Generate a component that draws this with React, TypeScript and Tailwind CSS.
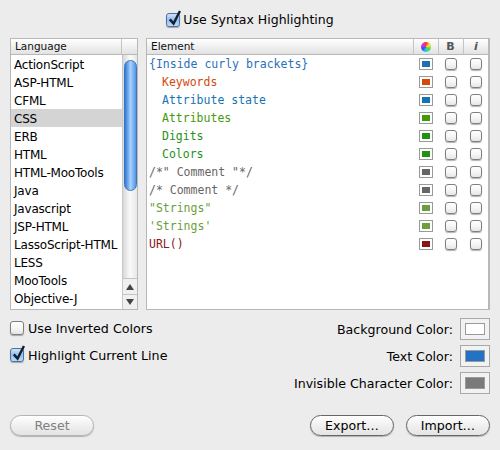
import React from "react";

const languages = ["ActionScript","ASP-HTML","CFML","CSS","ERB","HTML","HTML-MooTools","Java","Javascript","JSP-HTML","LassoScript-HTML","LESS","MooTools","Objective-J"];

const elements = [
  { name: "{Inside curly brackets}", indent: false, text: "text-[#2a70b8]", fill: "bg-[#2070b4]" },
  { name: "Keywords", indent: true, text: "text-[#d4480c]", fill: "bg-[#d44a08]" },
  { name: "Attribute state", indent: true, text: "text-[#1873b4]", fill: "bg-[#1273b6]" },
  { name: "Attributes", indent: true, text: "text-[#469a0e]", fill: "bg-[#459a08]" },
  { name: "Digits", indent: true, text: "text-[#26921a]", fill: "bg-[#1f9212]" },
  { name: "Colors", indent: true, text: "text-[#26921a]", fill: "bg-[#1f9212]" },
  { name: "/*\" Comment \"*/", indent: false, text: "text-[#666666]", fill: "bg-[#666666]" },
  { name: "/* Comment */", indent: false, text: "text-[#666666]", fill: "bg-[#666666]" },
  { name: "\"Strings\"", indent: false, text: "text-[#6b9e3c]", fill: "bg-[#6b9e3c]" },
  { name: "'Strings'", indent: false, text: "text-[#6b9e3c]", fill: "bg-[#6b9e3c]" },
  { name: "URL()", indent: false, text: "text-[#851a1a]", fill: "bg-[#851616]" },
];

function Check({ checked, size = "small" }: { checked?: boolean; size?: "small" | "large" }) {
  const box = size === "large" ? "w-[14px] h-[14px] rounded-[3px]" : "w-[12px] h-[12px] rounded-[3px]";
  const skin = checked
    ? "bg-gradient-to-b from-[#cfe3fa] via-[#8fbcf0] to-[#bfdcfa] border-[#4f6f9c]"
    : "bg-gradient-to-b from-[#ffffff] via-[#f6f6f6] to-[#e6e6e6] border-[#7f7f7f]";
  return (
    <span className={`relative block shrink-0 border shadow-[0_1px_1px_rgba(0,0,0,0.3)] ${box} ${skin}`}>
      {checked && (
        <svg viewBox="0 0 16 18" className="absolute left-[0px] top-[-5px] w-[15px] h-[18px]">
          <path d="M3 10.5 L7 15 L13.8 1.5" fill="none" stroke="#14202e" strokeWidth="2.6" />
        </svg>
      )}
    </span>
  );
}

function Swatch({ fill }: { fill: string }) {
  return (
    <span className="flex items-center justify-center w-[14px] h-[12px] border border-[#999999] bg-white">
      <span className={`block w-[8px] h-[6px] ${fill}`} />
    </span>
  );
}

function Well({ fill }: { fill: string }) {
  return (
    <span className="flex items-center justify-center w-[30px] h-[22px] border border-[#a8a8a8] bg-[#f2f2f2]">
      <span className={`block w-[20px] h-[12px] border border-[#9a9a9a] ${fill}`} />
    </span>
  );
}

function Button({ label, disabled }: { label: string; disabled?: boolean }) {
  return (
    <div
      className={`w-[84px] h-[21px] pt-[1px] rounded-full border flex items-center justify-center text-[12.6px] leading-none bg-gradient-to-b from-[#ffffff] via-[#f0f0f0] to-[#e4e4e4] shadow-[0_1px_1px_rgba(0,0,0,0.25)] ${
        disabled ? "border-[#b4b4b4] text-[#808080]" : "border-[#666666] text-black"
      }`}
    >
      {label}
    </div>
  );
}

const headerBg = "bg-gradient-to-b from-[#ffffff] via-[#f0f0f0] to-[#e2e2e2]";

export default function App() {
  return (
    <div className="w-[500px] h-[450px] bg-[#ececec] flex flex-col overflow-hidden font-['DejaVu_Sans','Liberation_Sans',sans-serif] text-black">
      <div className="h-[38px] flex items-start justify-center pt-[10px]">
        <div className="flex items-center gap-[3px]">
          <Check checked size="large" />
          <span className="text-[12.5px] leading-[18px] pt-[1px]">Use Syntax Highlighting</span>
        </div>
      </div>

      <div className="flex px-[10px] gap-[8px] h-[272px]">
        <div className="w-[128px] border border-[#b8b8b8] bg-white flex flex-col overflow-hidden">
          <div className={`h-[16px] shrink-0 flex border-b border-[#b8b8b8] ${headerBg}`}>
            <div className="w-[111px] pl-[4px] text-[10.5px] leading-[15px] font-medium border-r border-[#c4c4c4] text-[#111111]">Language</div>
          </div>
          <div className="flex flex-1 min-h-0">
            <div className="w-[111px] overflow-hidden">
              {languages.map((l) => (
                <div key={l} className={`h-[18px] shrink-0 pl-[3px] pt-[1px] text-[12px] tracking-[-0.2px] leading-[18px] whitespace-nowrap ${l === "CSS" ? "bg-[#d4d4d4]" : ""}`}>{l}</div>
              ))}
            </div>
            <div className="w-[15px] flex flex-col border-l border-[#c8c8c8] bg-gradient-to-r from-[#d8d8d8] via-[#fafafa] to-[#e8e8e8]">
              <div className="flex-1 px-[0.5px] pt-[5px]">
                <div className="h-[131px] rounded-full border border-[#3f76b8] bg-gradient-to-r from-[#2f78d8] via-[#a8d2fb] to-[#4e95e6]" />
              </div>
              <div className="h-[16px] flex items-center justify-center border-t border-[#c4c4c4] bg-[#f0f0f0]">
                <svg viewBox="0 0 8 6" className="w-[8px] h-[6px]"><path d="M4 0 L8 6 L0 6 Z" fill="#444444" /></svg>
              </div>
              <div className="h-[15px] flex items-center justify-center border-t border-[#c4c4c4] bg-[#f0f0f0]">
                <svg viewBox="0 0 8 6" className="w-[8px] h-[6px]"><path d="M0 0 L8 0 L4 6 Z" fill="#444444" /></svg>
              </div>
            </div>
          </div>
        </div>

        <div className="w-[344px] border border-[#b8b8b8] border-r-2 bg-white flex flex-col overflow-hidden">
          <div className={`h-[16px] shrink-0 flex border-b border-[#b8b8b8] ${headerBg}`}>
            <div className="flex-1 pl-[4px] text-[10.5px] leading-[15px] font-medium text-[#111111]">Element</div>
            <div className="w-[25px] flex items-center justify-center border-l border-[#c4c4c4]">
              <span className="block w-[10px] h-[10px] rounded-full bg-[conic-gradient(#ff3030,#ffe030,#40e040,#30d0e0,#3050f0,#e030e0,#ff3030)]" />
            </div>
            <div className="w-[25px] text-center border-l border-[#c4c4c4] text-[11px] leading-[15px] font-bold text-[#555555] pr-[1px]">B</div>
            <div className="w-[25px] text-center border-l border-[#c4c4c4] text-[11px] leading-[15px] italic font-bold text-[#555555]">i</div>
          </div>
          <div className="flex flex-col">
            {elements.map((e) => (
              <div key={e.name} className="h-[18px] flex items-center">
                <div className={`flex-1 h-[18px] font-['DejaVu_Sans_Mono',monospace] text-[11.5px] leading-[18px] whitespace-pre ${e.text} ${e.indent ? "pl-[15px]" : "pl-[2px]"}`}>{e.name}</div>
                <div className="w-[25px] flex justify-center"><Swatch fill={e.fill} /></div>
                <div className="w-[25px] flex justify-center pl-[1px]"><Check /></div>
                <div className="w-[25px] flex justify-center pl-[1px]"><Check /></div>
              </div>
            ))}
          </div>
        </div>
      </div>

      <div className="flex justify-between px-[10px] pt-[8px]">
        <div className="flex flex-col gap-[13px] pt-[3px]">
          <div className="flex items-center gap-[4px] h-[14px]">
            <Check size="large" />
            <span className="text-[12.7px] leading-[14px] pt-[1px]">Use Inverted Colors</span>
          </div>
          <div className="flex items-center gap-[4px] h-[14px]">
            <Check checked size="large" />
            <span className="text-[12.7px] leading-[14px] pt-[1px]">Highlight Current Line</span>
          </div>
        </div>
        <div className="flex flex-col gap-[5px]">
          {[
            ["Background Color:", "bg-white"],
            ["Text Color:", "bg-[#2373c4]"],
            ["Invisible Character Color:", "bg-[#7a7a7a]"],
          ].map(([label, fill]) => (
            <div key={label} className="flex items-center justify-end gap-[7px] h-[22px]">
              <span className="text-[12.6px] leading-[22px] h-[22px] pt-[1px]">{label}</span>
              <Well fill={fill} />
            </div>
          ))}
        </div>
      </div>

      <div className="flex justify-between px-[10px] pt-[21px]">
        <Button label="Reset" disabled />
        <div className="flex gap-[12px]">
          <Button label="Export…" />
          <Button label="Import…" />
        </div>
      </div>
    </div>
  );
}
